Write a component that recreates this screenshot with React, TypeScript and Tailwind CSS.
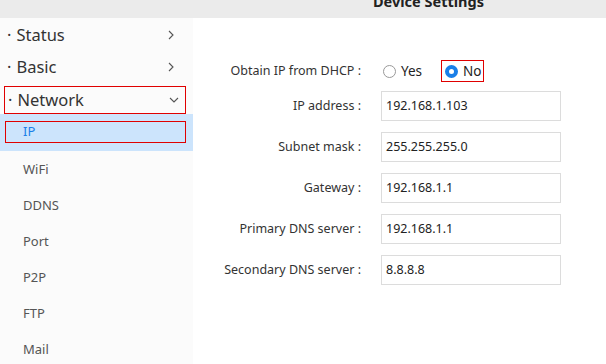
import React from "react";

const font = { fontFamily: '"Noto Sans", "Open Sans", Arial, sans-serif' };

function Chevron({ down }: { down?: boolean }) {
  return (
    <svg width="10" height="10" viewBox="0 0 10 10" className="text-[#555]">
      {down ? (
        <path d="M1 3 L5 7 L9 3" fill="none" stroke="currentColor" strokeWidth="1.1" />
      ) : (
        <path d="M3 1 L7 5 L3 9" fill="none" stroke="currentColor" strokeWidth="1.1" />
      )}
    </svg>
  );
}

function TopItem({ label, down, boxed }: { label: string; down?: boolean; boxed?: boolean }) {
  return (
    <div className={"flex items-center justify-between text-[16.5px] text-[#333] " + (boxed ? "h-[28px] mx-[4px] w-[182px] border border-[#e00000] pl-[3px] pr-[6px]" : "h-[32px] w-[186px] pl-[7px] pr-[10px]")}>
      <span>
        <span className="mr-[5px]">·</span>
        {label}
      </span>
      <Chevron down={down} />
    </div>
  );
}

function Row({ label, value }: { label: string; value: string }) {
  return (
    <div className="flex items-center h-[30px]">
      <div className="w-[168px] text-right text-[12.5px] text-[#333] pr-0">{label} :</div>
      <div className="ml-[20px] w-[180px] h-[30px] border border-[#dcdcdc] flex items-center pl-[4px] text-[12.5px] text-[#222]">
        {value}
      </div>
    </div>
  );
}

export default function App() {
  return (
    <div className="w-[606px] h-[364px] overflow-hidden bg-white flex flex-col" style={font}>
      <div className="h-[18px] bg-[#ebebeb] overflow-hidden shrink-0">
        <div className="pl-[373px] mt-[-9px] text-[14.5px] font-bold text-[#222] leading-[20px]">Device Settings</div>
      </div>
      <div className="flex flex-1">
        <div className="w-[193px] bg-[#fbfbfb] pt-[1px]">
          <TopItem label="Status" />
          <TopItem label="Basic" />
          <div className="h-[31px] pt-[3px]">
            <TopItem label="Network" down boxed />
          </div>
          <div className="h-[37px] bg-[#cce4fc] pt-[7px]">
            <div className="ml-[5px] w-[181px] h-[22px] border border-[#e00000] flex items-center pl-[17px] text-[13px] text-[#1a7fe8]">
              IP
            </div>
          </div>
          <div className="pt-[1px]">
            {["WiFi", "DDNS", "Port", "P2P", "FTP", "Mail"].map((s) => (
              <div key={s} className="h-[36px] flex items-center pl-[23px] text-[13px] text-[#555]">
                {s}
              </div>
            ))}
          </div>
        </div>
        <div className="flex-1 pt-[38px]">
          <div className="flex items-center h-[30px]">
            <div className="w-[168px] text-right text-[12.5px] text-[#333]">Obtain IP from DHCP :</div>
            <div className="ml-[22px] flex items-center">
              <div className="w-[58px] flex items-center">
                <span className="w-[13px] h-[13px] rounded-full border border-[#999] bg-white"></span>
                <span className="ml-[5px] text-[13.5px] text-[#222]">Yes</span>
              </div>
              <div className="w-[43px] h-[22px] border border-[#e00000] flex items-center pl-[3px]">
                <span className="w-[13px] h-[13px] rounded-full border-[4px] border-[#1a7fe8] bg-white"></span>
                <span className="ml-[5px] text-[13.5px] text-[#222]">No</span>
              </div>
            </div>
          </div>
          <div className="mt-[5px] flex flex-col gap-[11px]">
            <Row label="IP address" value="192.168.1.103" />
            <Row label="Subnet mask" value="255.255.255.0" />
            <Row label="Gateway" value="192.168.1.1" />
            <Row label="Primary DNS server" value="192.168.1.1" />
            <Row label="Secondary DNS server" value="8.8.8.8" />
          </div>
        </div>
      </div>
    </div>
  );
}
